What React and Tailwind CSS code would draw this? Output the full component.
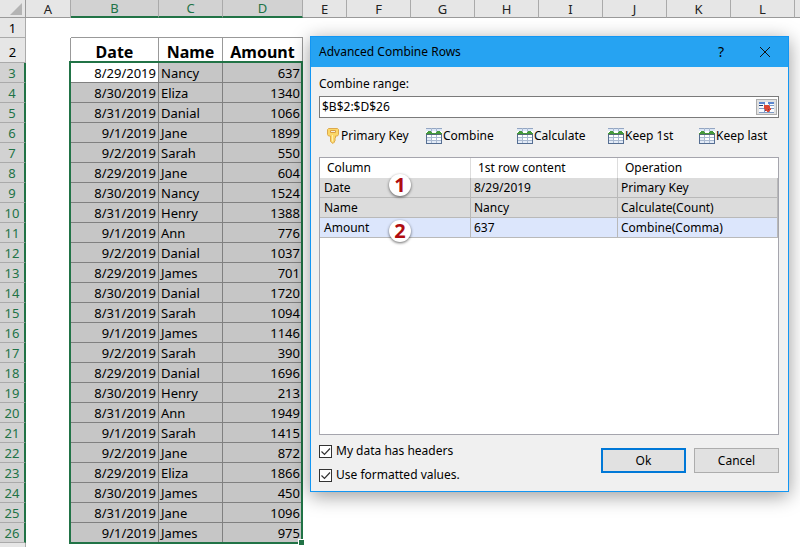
import { useState } from 'react';

const columns = [
  { id: 'A', width: 'w-[45px]' },
  { id: 'B', width: 'w-22', selected: true },
  { id: 'C', width: 'w-16', selected: true },
  { id: 'D', width: 'w-20', selected: true },
  { id: 'E', width: 'w-11' },
  { id: 'F', width: 'w-16' },
  { id: 'G', width: 'w-16' },
  { id: 'H', width: 'w-16' },
  { id: 'I', width: 'w-16' },
  { id: 'J', width: 'w-16' },
  { id: 'K', width: 'w-16' },
  { id: 'L', width: 'w-16' },
];

const records = [
  ['8/29/2019', 'Nancy', 637],
  ['8/30/2019', 'Eliza', 1340],
  ['8/31/2019', 'Danial', 1066],
  ['9/1/2019', 'Jane', 1899],
  ['9/2/2019', 'Sarah', 550],
  ['8/29/2019', 'Jane', 604],
  ['8/30/2019', 'Nancy', 1524],
  ['8/31/2019', 'Henry', 1388],
  ['9/1/2019', 'Ann', 776],
  ['9/2/2019', 'Danial', 1037],
  ['8/29/2019', 'James', 701],
  ['8/30/2019', 'Danial', 1720],
  ['8/31/2019', 'Sarah', 1094],
  ['9/1/2019', 'James', 1146],
  ['9/2/2019', 'Sarah', 390],
  ['8/29/2019', 'Danial', 1696],
  ['8/30/2019', 'Henry', 213],
  ['8/31/2019', 'Ann', 1949],
  ['9/1/2019', 'Sarah', 1415],
  ['9/2/2019', 'Jane', 872],
  ['8/29/2019', 'Eliza', 1866],
  ['8/30/2019', 'James', 450],
  ['8/31/2019', 'Jane', 1096],
  ['9/1/2019', 'James', 975],
];

const operations = [
  { column: 'Date', content: '8/29/2019', operation: 'Primary Key', badge: 1, badgeTop: '-top-1' },
  { column: 'Name', content: 'Nancy', operation: 'Calculate(Count)' },
  { column: 'Amount', content: '637', operation: 'Combine(Comma)', badge: 2, badgeTop: 'top-0.5' },
];

function KeyIcon() {
  return (
    <svg width="12" height="16" viewBox="0 0 12 16" className="shrink-0">
      <path d="M1.500.5h9l1 1v5l-1 1.500H8.500v2l-1 1 1 1-1 1v1L6 15.500 3.500 13.500V8h-2L.5 6.500v-5z" fill="#fbd768" stroke="#dda84c" />
      <path d="M3.500 2.500h5v2h-5z" fill="#f0eee6" stroke="#d99f45" />
      <path d="M5.500 7v6.500" stroke="#fff0ae" />
    </svg>
  );
}

function TableIcon() {
  return (
    <svg width="16" height="16" viewBox="0 0 16 16" shapeRendering="crispEdges" className="shrink-0">
      <path d="M0 0h16v16H0z" fill="#fff" />
      <path d="M0 0h16v1H0z" fill="#94a6c2" />
      <path d="M0 1h16v2H0z" fill="#dce7f7" />
      <path d="M0 9h5v6H0zM6 12h4v3H6zM11 12h4v3h-4z" fill="#e3ebf7" />
      <path d="M5 0h1v16H5zM10 0h1v16h-1zM0 9h16v1H0zM0 12h16v1H0z" fill="#a9b9d0" />
      <path d="M1 4h1V3h3v1h1v1h4V4h1V3h3v1h1v1h1v2H0V5h1z" fill="#459a3c" />
      <path d="M0 6h16v1H0z" fill="#526b72" />
      <path d="M0 7h1v9H0zM15 7h1v9h-1zM0 15h16v1H0z" fill="#556e92" />
    </svg>
  );
}

function RangeIcon() {
  return (
    <svg width="15" height="11" viewBox="0 0 15 11" shapeRendering="crispEdges">
      <path d="M0 0h15v11H0z" fill="#f8fbff" />
      <path d="M0 0h6v2H0zM9 0h6v2H9z" fill="#5c87d0" />
      <path d="M0 6h5v1H0zM11 6h4v1h-4zM10 3h5v1h-5zM0 10h15v1H0zM5 2h1v9H5zM10 2h1v9h-1z" fill="#7f9bc5" />
      <path d="M0 3h4v1H0z" fill="#243f69" />
      <path d="M5 3h5v1h1v2h1v2h-1v1h-1v1H8V9H7V8H6V7H5z" fill="#dc4634" />
      <path d="M6 8h1v1H6zM9 7h1v1H9z" fill="#8d3042" />
    </svg>
  );
}

function ToolButton({ icon, label, className = '' }) {
  return (
    <button type="button" className={`flex items-center text-left ${className}`}>
      {icon}
      {label}
    </button>
  );
}

function CheckOption({ label }) {
  const [checked, setChecked] = useState(true);

  return (
    <label className="flex h-6 items-center gap-1">
      <span className="relative h-[13px] w-[13px]">
        <input
          type="checkbox"
          checked={checked}
          onChange={e => setChecked(e.target.checked)}
          className="block h-full w-full appearance-none border border-[#333] bg-white"
        />
        {checked && (
          <svg viewBox="0 0 13 13" className="pointer-events-none absolute inset-0" fill="none" stroke="#333">
            <path d="M2.500 6.500l3 3 5.500-6" strokeWidth="1.200" />
          </svg>
        )}
      </span>
      {label}
    </label>
  );
}

function Sheet() {
  return (
    <div className="relative">
      <table className="w-[820px] table-fixed border-separate border-spacing-0 text-[13px] leading-4">
        <colgroup>
          <col className="w-[26px]" />
          {columns.map(col => <col key={col.id} className={col.width} />)}
          <col />
        </colgroup>
        <thead>
          <tr className="h-[18px]">
            <th className="border-r border-b border-[#9a9a9a] bg-[#e6e6e6] p-0">
              <svg width="12" height="12" viewBox="0 0 12 12" className="ml-2.5">
                <path d="M12 0v12H0z" fill="#b4b4b4" />
              </svg>
            </th>
            {columns.map(col => (
              <th
                key={col.id}
                className={`border-r p-0 font-normal ${
                  col.selected
                    ? 'border-r-[#aaa] border-b-2 border-b-[#217346] bg-[#d2d2d2] text-[#217346]'
                    : 'border-b border-r-[#aaa] border-b-[#999] bg-[#e6e6e6] text-[#222]'
                }`}
              >
                {col.id}
              </th>
            ))}
            <th className="border-b border-[#999] bg-[#e6e6e6]" />
          </tr>
        </thead>
        <tbody>
          <tr className="h-5">
            <th className="border-r border-b border-[#aaa] bg-[#e6e6e6] p-0 font-normal">1</th>
            <td />
            <td className="border-b border-[#999]" />
            <td className="border-b border-[#999]" />
            <td className="border-b border-[#999]" />
          </tr>
          <tr className="h-[25px]">
            <th className="border-r border-b border-[#aaa] bg-[#e6e6e6] p-0 pt-1 font-normal">2</th>
            <td className="border-r border-[#999]" />
            <td className="border-r border-[#999] p-0 pt-0.5 text-center text-base leading-5 font-bold">Date</td>
            <td className="border-r border-[#999] p-0 pt-0.5 text-center text-base leading-5 font-bold">Name</td>
            <td className="border-r border-[#999] p-0 pt-0.5 text-center text-base leading-5 font-bold">Amount</td>
          </tr>
          {records.map(([date, name, amount], i) => (
            <tr key={i} className="h-5">
              <th className="border-r-2 border-b border-r-[#217346] border-b-[#aaa] bg-[#d2d2d2] p-0 font-normal text-[#217346]">
                {i + 3}
              </th>
              <td />
              <td className={`border-r border-b border-[#808080] p-0 pr-0.5 text-right ${i === 0 ? 'bg-white' : 'bg-[#c6c6c6]'}`}>
                {date}
              </td>
              <td className="border-r border-b border-[#808080] bg-[#c6c6c6] p-0 pl-0.5">{name}</td>
              <td className="border-b border-[#808080] bg-[#c6c6c6] p-0 pr-[3px] text-right">{amount}</td>
            </tr>
          ))}
          <tr className="h-5">
            <th className="border-r border-[#aaa] bg-[#e6e6e6]" />
          </tr>
        </tbody>
      </table>
      {/* Selection outline */}
      <div className="pointer-events-none absolute top-[61px] left-[69px] h-[483px] w-[234px] border-2 border-[#217346]">
        <span className="absolute -right-[3px] -bottom-[3px] h-[6px] w-[6px] border-t border-l border-white bg-[#217346]" />
      </div>
    </div>
  );
}

function CombineDialog() {
  const [range, setRange] = useState('$B$2:$D$26');

  return (
    <section
      role="dialog"
      aria-labelledby="dialog-title"
      className="absolute top-9 left-[310px] w-[479px] border border-[#1296f3] bg-[#f0f0f0] text-xs leading-4 shadow-[0_4px_18px_rgba(0,0,0,0.4)]"
    >
      <header className="flex h-[30px] items-center bg-[#26a3f2] pr-px pl-2">
        <h1 id="dialog-title" className="flex-1">Advanced Combine Rows</h1>
        <button type="button" aria-label="Help" className="w-11 text-sm">?</button>
        <button type="button" aria-label="Close" className="flex w-11 justify-center">
          <svg width="10" height="10" viewBox="0 0 10 10" stroke="#111">
            <path d="M0 0l10 10M10 0L0 10" />
          </svg>
        </button>
      </header>

      <div className="pt-2 pr-[9px] pb-1 pl-2">
        <label htmlFor="range" className="block h-[21px] pt-px">Combine range:</label>
        <div className="flex h-[22px] items-center border border-[#7a7a7a] bg-white pr-px">
          <input
            id="range"
            value={range}
            onChange={e => setRange(e.target.value)}
            className="min-w-0 flex-1 pl-0.5 outline-none"
          />
          <button type="button" aria-label="Select range" className="flex h-4 w-[21px] items-center justify-center border border-[#adadad] bg-[#e1e1e1]">
            <RangeIcon />
          </button>
        </div>

        <div className="flex h-[39px] items-start pt-[10px] pl-2">
          <ToolButton icon={<KeyIcon />} label="Primary Key" className="w-[99px] gap-0.5" />
          <ToolButton icon={<TableIcon />} label="Combine" className="w-[91px] gap-px" />
          <ToolButton icon={<TableIcon />} label="Calculate" className="w-[91px] gap-px" />
          <ToolButton icon={<TableIcon />} label="Keep 1st" className="w-[91px] gap-px" />
          <ToolButton icon={<TableIcon />} label="Keep last" className="gap-px" />
        </div>

        <div className="h-[278px] border border-[#a5a5ad] bg-white">
          <table className="w-full table-fixed border-separate border-spacing-0 text-left">
            <colgroup>
              <col className="w-[151px]" />
              <col className="w-[147px]" />
              <col />
            </colgroup>
            <thead>
              <tr className="h-5">
                <th className="border-r border-[#ddd] p-0 pl-[7px] font-normal">Column</th>
                <th className="border-r border-[#ddd] p-0 pl-[7px] font-normal">1st row content</th>
                <th className="p-0 pl-[7px] font-normal">Operation</th>
              </tr>
            </thead>
            <tbody>
              {operations.map(row => (
                <tr key={row.column} className={`h-5 ${row.column === 'Amount' ? 'bg-[#dce6fc]' : 'bg-[#dcdcdc]'}`}>
                  <td className="relative border-r border-b border-[#b9b9b9] p-0 pl-1">
                    {row.column}
                    {row.badge && (
                      <span className={`absolute left-[69px] z-10 flex h-[22px] w-[22px] items-center justify-center rounded-full bg-white text-xl leading-5 font-bold text-[#b00d10] shadow-[0_1px_3px_rgba(0,0,0,0.6)] ${row.badgeTop}`}>
                        {row.badge}
                      </span>
                    )}
                  </td>
                  <td className="border-r border-b border-[#b9b9b9] p-0 pl-[3px]">{row.content}</td>
                  <td className="border-r border-b border-[#b9b9b9] p-0 pl-[3px]">{row.operation}</td>
                </tr>
              ))}
            </tbody>
          </table>
        </div>

        <footer className="flex pt-1">
          <div className="flex-1">
            <CheckOption label="My data has headers" />
            <CheckOption label="Use formatted values." />
          </div>
          <div className="flex gap-2 pt-[9px]">
            <button type="button" className="h-[25px] w-[85px] border-2 border-[#0078d7] bg-[#e1e1e1] leading-3">Ok</button>
            <button type="button" className="h-[25px] w-[85px] border border-[#adadad] bg-[#e1e1e1] leading-3">Cancel</button>
          </div>
        </footer>
      </div>
    </section>
  );
}

export default function App() {
  return (
    <main className="relative h-screen overflow-hidden bg-white font-['Noto_Sans',sans-serif] text-black">
      <Sheet />
      <CombineDialog />
    </main>
  );
}
